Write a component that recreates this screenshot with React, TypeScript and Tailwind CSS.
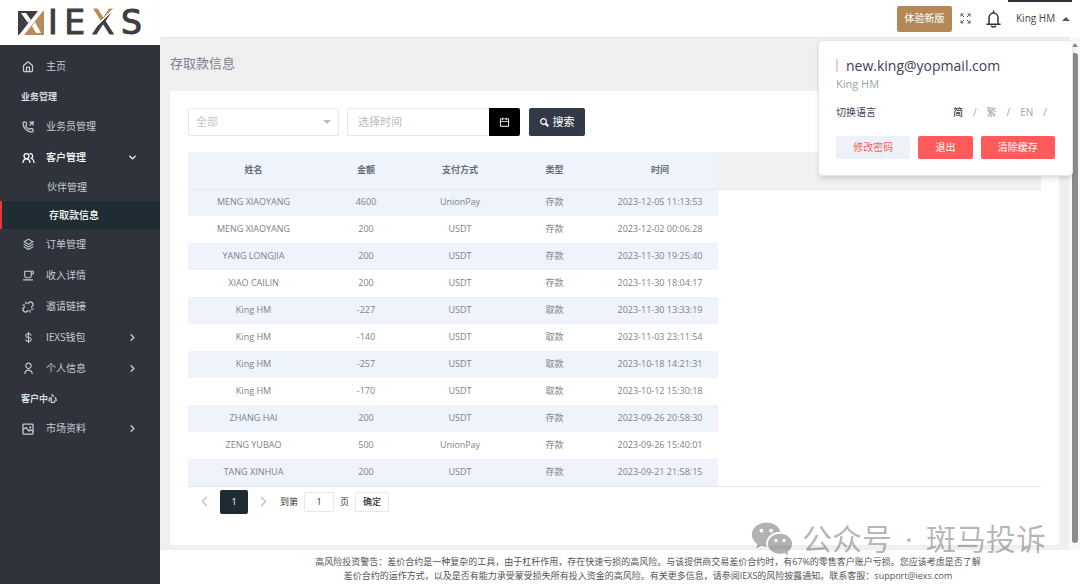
import { useState, type ReactNode } from "react";
import { ChevronDown, ChevronLeft, ChevronRight, House, PhoneOutgoing, Unlink } from "lucide-react";
import { RiCalendarLine, RiCupLine, RiStackLine, RiUserLine, RiWechatFill } from "react-icons/ri";
import { BiDollar } from "react-icons/bi";

const records = [
  ["MENG XIAOYANG", "4600", "UnionPay", "存款", "2023-12-05 11:13:53"],
  ["MENG XIAOYANG", "200", "USDT", "存款", "2023-12-02 00:06:28"],
  ["YANG LONGJIA", "200", "USDT", "存款", "2023-11-30 19:25:40"],
  ["XIAO CAILIN", "200", "USDT", "存款", "2023-11-30 18:04:17"],
  ["King HM", "-227", "USDT", "取款", "2023-11-30 13:33:19"],
  ["King HM", "-140", "USDT", "取款", "2023-11-03 23:11:54"],
  ["King HM", "-257", "USDT", "取款", "2023-10-18 14:21:31"],
  ["King HM", "-170", "USDT", "取款", "2023-10-12 15:30:18"],
  ["ZHANG HAI", "200", "USDT", "存款", "2023-09-26 20:58:30"],
  ["ZENG YUBAO", "500", "UnionPay", "存款", "2023-09-26 15:40:01"],
  ["TANG XINHUA", "200", "USDT", "存款", "2023-09-21 21:58:15"],
];

const columns = ["姓名", "金额", "支付方式", "类型", "时间"];

interface NavItemProps {
  icon: ReactNode;
  label: string;
  arrow?: "down" | "right";
  active?: boolean;
}

function NavItem({ icon, label, arrow, active }: NavItemProps) {
  return (
    <a
      href="#"
      className={`flex h-[31px] items-center px-[22px] text-[10px] ${active ? "font-medium text-white" : "text-[#c3ced6]"}`}
    >
      <span className="flex w-6 items-center">{icon}</span>
      <span className="flex-1">{label}</span>
      {arrow === "down" && <ChevronDown size={11} strokeWidth={3} />}
      {arrow === "right" && <ChevronRight size={11} strokeWidth={3} />}
    </a>
  );
}

function NavHeading({ children }: { children: ReactNode }) {
  return <p className="flex h-[29px] items-center pl-[21px] text-[9px] font-bold text-[#d5dfe4]">{children}</p>;
}

function ClientsIcon() {
  return (
    <svg width="13" height="12" viewBox="0 0 26 24" fill="none" stroke="currentColor" strokeWidth="2.500">
      <circle cx="9" cy="8" r="5" />
      <path d="M2 22C2 17 5 13.500 9 13.500S16 17 16 22" />
      <path d="M15 3.300A5 5 0 1 1 17.500 13C21.500 13.500 24 17 24 22" />
    </svg>
  );
}

function PictureIcon() {
  return (
    <svg width="12" height="12" viewBox="0 0 24 24" fill="none" stroke="currentColor" strokeWidth="2.500">
      <rect x="2" y="2" width="20" height="20" rx="1" />
      <path d="M2 13L8 9L14 16L17 13L22 17" />
      <circle cx="16.500" cy="8.500" r="1" />
    </svg>
  );
}

function Logo() {
  return (
    <a href="#" aria-label="IEXS" className="flex h-[45px] items-center gap-1 bg-white pl-[18px]">
      <svg width="26" height="24" viewBox="0 0 26 24">
        <path d="M0 0H20L1 24H0Z" fill="#3f3d3f" />
        <path d="M26 0V24H6L25 0Z" fill="#b78b5b" />
        <path d="M3 2H8L13 9L10 12Z" fill="#fff" />
        <path d="M14 15L17 11L23 22H18Z" fill="#fff" />
      </svg>
      <span className="flex w-[94px] justify-between font-['DejaVu_Sans'] text-[33px] leading-none text-[#3f3d3f] [-webkit-text-stroke:1px]">
        <span>I</span>
        <span>E</span>
        <span className="bg-[linear-gradient(135deg,#b78b5b_42%,transparent_42%,transparent_46%,#3f3d3f_46%)] bg-clip-text text-transparent">
          X
        </span>
        <span>S</span>
      </span>
    </a>
  );
}

function Sidebar() {
  return (
    <aside className="w-[160px] shrink-0 bg-[#30333b]">
      <Logo />
      <nav className="pt-[6px]">
        <NavItem icon={<House size={12} strokeWidth={2.500} />} label="主页" />
        <NavHeading>业务管理</NavHeading>
        <NavItem icon={<PhoneOutgoing size={12} strokeWidth={2.500} />} label="业务员管理" />
        <NavItem icon={<ClientsIcon />} label="客户管理" arrow="down" active />
        <a href="#" className="flex h-[28px] items-center pl-[47px] text-[10px] text-[#c3ced6]">
          伙伴管理
        </a>
        <a
          href="#"
          className="flex h-[28px] items-center border-l-2 border-[#e53935] bg-[#202c33] pl-[47px] text-[10px] font-medium text-white"
        >
          存取款信息
        </a>
        <NavItem icon={<RiStackLine size={13} />} label="订单管理" />
        <NavItem icon={<RiCupLine size={13} />} label="收入详情" />
        <NavItem icon={<Unlink size={12} strokeWidth={2.500} />} label="邀请链接" />
        <NavItem icon={<BiDollar size={13} />} label="IEXS钱包" arrow="right" />
        <NavItem icon={<RiUserLine size={13} />} label="个人信息" arrow="right" />
        <NavHeading>客户中心</NavHeading>
        <NavItem icon={<PictureIcon />} label="市场资料" arrow="right" />
      </nav>
    </aside>
  );
}

function UserPanel() {
  return (
    <div className="absolute top-10 right-[7px] z-10 w-[255px] rounded-sm border border-gray-200 bg-white px-[17px] pt-[14px] pb-4 shadow-md">
      <div className="flex h-5 items-center gap-2">
        <span className="h-[13px] w-[2px] bg-[#ffc4c8]" />
        <span className="text-[14px] text-[#3b4252]">new.king@yopmail.com</span>
      </div>
      <p className="h-[18px] text-[11px] leading-[18px] text-[#98a6ad]">King HM</p>
      <div className="mt-[9px] flex h-5 items-center justify-between text-[10px] text-[#98a6ad]">
        <span className="text-[#3b4252]">切换语言</span>
        <div className="flex gap-[10px] pr-2">
          <a href="#" className="font-medium text-[#3b4252]">
            简
          </a>
          <span>/</span>
          <a href="#">繁</a>
          <span>/</span>
          <a href="#">EN</a>
          <span>/</span>
        </div>
      </div>
      <div className="mt-[14px] flex gap-2 text-[10px]">
        <button className="h-[23px] flex-[74] rounded-xs bg-[#eef1f7] text-[#ff5b5b]">修改密码</button>
        <button className="h-[23px] flex-[54] rounded-xs bg-[#ff5b5b] text-white">退出</button>
        <button className="h-[23px] flex-[74] rounded-xs bg-[#ff5b5b] text-white">清除缓存</button>
      </div>
    </div>
  );
}

function Header() {
  return (
    <header className="flex h-[37px] items-center justify-end bg-white pr-2 shadow-xs">
      <button className="h-[26px] w-[55px] rounded-xs bg-[#b58858] text-[10px] text-white">体验新版</button>
      <button aria-label="全屏" className="ml-2 text-[#555]">
        <svg width="11" height="11" viewBox="0 0 11 11" fill="none" stroke="currentColor">
          <path d="M1 3.500V1H3.500M1 1L4 4M7.500 1H10V3.500M10 1L7 4M1 7.500V10H3.500M1 10L4 7M7.500 10H10V7.500M10 10L7 7" />
        </svg>
      </button>
      <button aria-label="通知" className="ml-[15px] text-[#333]">
        <svg width="15" height="18" viewBox="0 0 15 18" fill="none" stroke="currentColor" strokeWidth="1.500">
          <path d="M7.500 0.500V2.500M3 14V8a4.500 5 0 0 1 9 0V14M0.500 14.200H14.500" />
          <path d="M5.500 15.500a2 1.500 0 0 0 4 0" />
        </svg>
      </button>
      <button className="ml-[7px] flex h-full w-[64px] items-center justify-between border-t-2 border-[#2f3238] pr-[2px] pb-[2px] pl-2 text-[10px] text-[#444]">
        King HM
        <svg width="8" height="4" viewBox="0 0 8 4" fill="#555">
          <path d="M0 4L4 0L8 4Z" />
        </svg>
      </button>
    </header>
  );
}

function Filters() {
  return (
    <form className="flex h-7 items-stretch" onSubmit={(e) => e.preventDefault()}>
      <div className="relative w-[151px]">
        <select
          aria-label="类型"
          className="h-full w-full appearance-none rounded-xs border border-gray-200 bg-white pl-[7px] text-[11px] text-[#c8c8c8]"
        >
          <option>全部</option>
        </select>
        <svg className="pointer-events-none absolute top-3 right-2" width="8" height="4" viewBox="0 0 8 4" fill="#bbb">
          <path d="M0 0H8L4 4Z" />
        </svg>
      </div>
      <input
        aria-label="选择时间"
        placeholder="选择时间"
        className="ml-2 w-[142px] rounded-l-xs border border-r-0 border-gray-200 pl-[10px] text-[11px] placeholder:text-[#b8bcc2]"
      />
      <button
        type="button"
        aria-label="日历"
        className="flex w-[31px] items-center justify-center rounded-r-xs bg-black text-white"
      >
        <RiCalendarLine size={11} />
      </button>
      <button className="ml-[9px] flex w-14 items-center justify-center gap-1 rounded-xs bg-[#313a46] text-[11px] text-white">
        <svg width="9" height="9" viewBox="0 0 9 9" fill="none" stroke="currentColor">
          <circle cx="3.500" cy="3.500" r="2.800" strokeWidth="1.200" />
          <path d="M5.500 5.500L8.300 8.300" strokeWidth="2" />
        </svg>
        搜索
      </button>
    </form>
  );
}

function RecordTable() {
  return (
    <table className="mt-4 w-full table-fixed border-collapse border-b border-gray-200 text-center text-[9px] text-[#7c828c]">
      <colgroup>
        <col className="w-[131px]" />
        <col className="w-[94px]" />
        <col className="w-[94px]" />
        <col className="w-[95px]" />
        <col className="w-[116px]" />
        <col />
      </colgroup>
      <thead>
        <tr className="h-[37px] border-b border-[#e6e8ec]">
          {columns.map((name) => (
            <th key={name} className="bg-[#eff3fb] p-0 pb-[2px] font-bold text-[#666e7a]">
              {name}
            </th>
          ))}
          <td className="bg-[#f1f1f1]" />
        </tr>
      </thead>
      <tbody>
        {records.map((row, i) => (
          <tr key={row[4]} className="h-[27px]">
            {row.map((cell, c) => (
              <td key={c} className={`p-0 pb-[2px] ${i % 2 === 0 ? "bg-[#eff3fb]" : "bg-white"}`}>
                {cell}
              </td>
            ))}
            <td />
          </tr>
        ))}
      </tbody>
    </table>
  );
}

function Pagination() {
  const [page, setPage] = useState("1");

  return (
    <div className="mt-[3px] flex items-center pl-2 text-[9px] text-[#333]">
      <button aria-label="上一页" className="text-[#bbb]">
        <ChevronLeft size={17} strokeWidth={1.500} />
      </button>
      <button className="ml-[7px] h-6 w-7 rounded-xs bg-[#1f2b33] text-white">1</button>
      <button aria-label="下一页" className="ml-[7px] text-[#bbb]">
        <ChevronRight size={17} strokeWidth={1.500} />
      </button>
      <label className="ml-2 flex items-center gap-[6px]">
        到第
        <input
          value={page}
          onChange={(e) => setPage(e.target.value)}
          className="h-5 w-[30px] rounded-xs border border-gray-200 text-center"
        />
        页
      </label>
      <button className="ml-[6px] h-5 w-[34px] rounded-xs border border-gray-200 font-medium">确定</button>
    </div>
  );
}

function App() {
  return (
    <div className="relative flex min-h-screen bg-[#efefef] font-['Open_Sans','Noto_Sans_CJK_SC',sans-serif]">
      <Sidebar />
      <div className="flex min-w-0 flex-1 flex-col">
        <Header />
        <div className="flex flex-1">
          <main className="flex flex-1 flex-col px-[10px] pb-[5px]">
            <h1 className="h-[54px] text-[13px] leading-[52px] text-[#7a808c]">存取款信息</h1>
            <section className="flex-1 rounded-xs bg-white px-[18px] pt-[17px]">
              <Filters />
              <RecordTable />
              <Pagination />
            </section>
          </main>
          <div className="flex w-[11px] flex-col items-center bg-[#f8f8f8] pt-[6px] pb-[7px]">
            <svg width="6" height="4" viewBox="0 0 6 4" fill="#888">
              <path d="M0 4L3 0L6 4Z" />
            </svg>
            <span className="mt-[6px] w-[6px] flex-1 rounded-full bg-[#8b8b8b]" />
          </div>
        </div>
        <footer className="bg-white pt-[5px] pb-[1px] pl-14 text-center text-[9px] leading-[14px] text-[#555]">
          <p>
            高风险投资警告：差价合约是一种复杂的工具，由于杠杆作用，存在快速亏损的高风险。与该提供商交易差价合约时，有67%的零售客户账户亏损。您应该考虑是否了解
          </p>
          <p>
            差价合约的运作方式，以及是否有能力承受蒙受损失所有投入资金的高风险。有关更多信息，请参阅IEXS的风险披露通知。联系客服：support@iexs.com
          </p>
        </footer>
      </div>
      <UserPanel />
      <div className="pointer-events-none absolute right-[34px] bottom-[23px] flex items-center text-[30px] leading-[28px] text-black/30">
        <RiWechatFill size={44} />
        <div className="ml-2 flex gap-[13px]">
          <span>公众号</span>
          <span>·</span>
          <span>斑马投诉</span>
        </div>
      </div>
    </div>
  );
}

export default App;
